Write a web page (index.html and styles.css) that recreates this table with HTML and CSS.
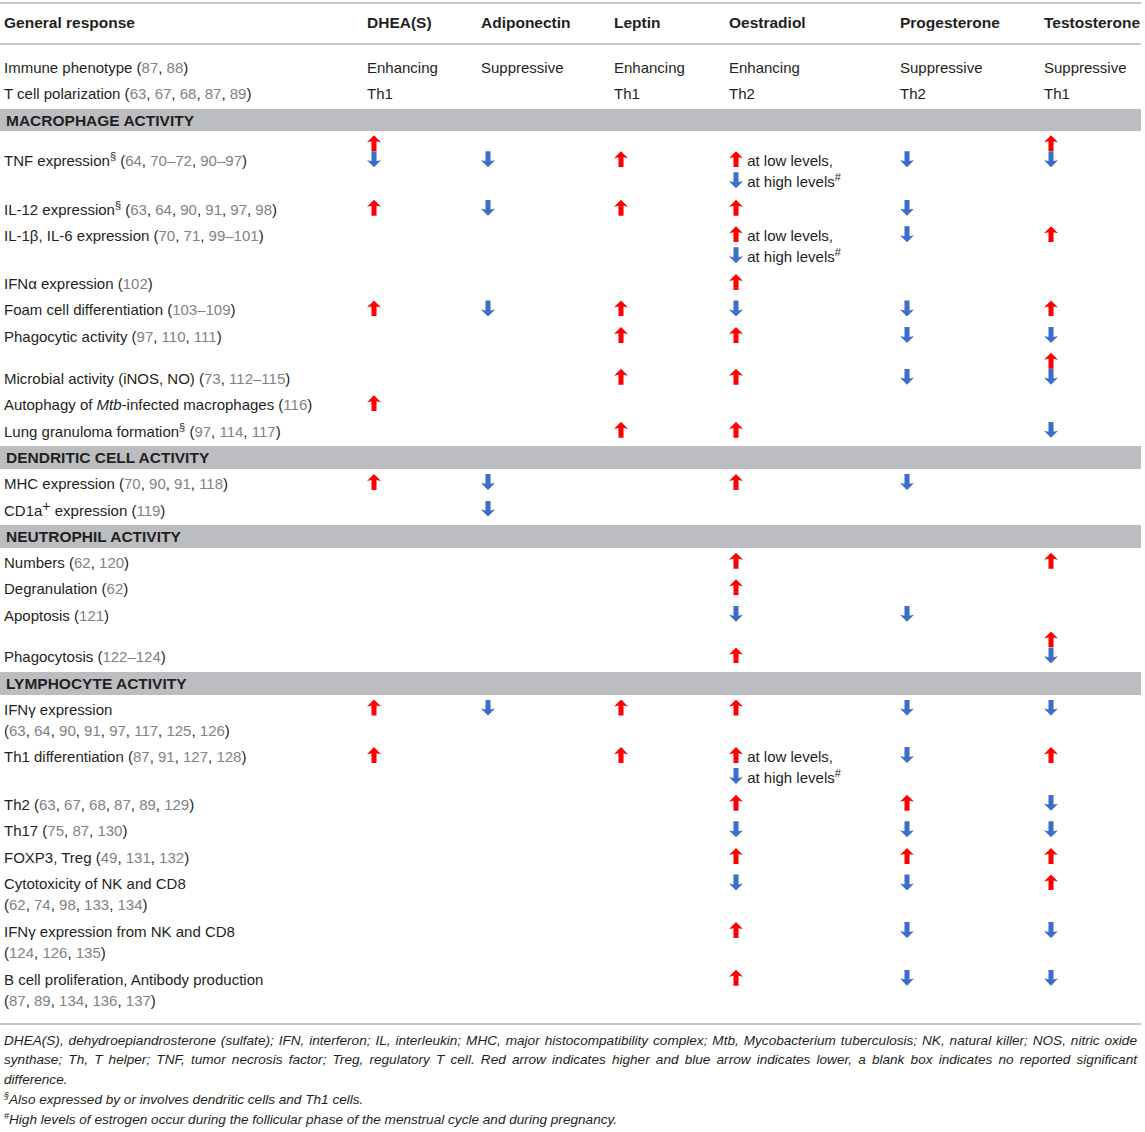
FILE: index.html
```html
<!DOCTYPE html>
<html lang="en">
<head>
    <meta charset="UTF-8">
    <title>Hormones and immune responses</title>
    <link rel="stylesheet" href="styles.css">
</head>
<body>
    <div class="page">
        <table class="data">
            <colgroup>
                <col class="c-resp">
                <col class="c-dhea">
                <col class="c-adipo">
                <col class="c-leptin">
                <col class="c-oes">
                <col class="c-prog">
                <col class="c-test">
            </colgroup>
            <thead>
                <tr>
                    <th>General response</th>
                    <th>DHEA(S)</th>
                    <th>Adiponectin</th>
                    <th>Leptin</th>
                    <th>Oestradiol</th>
                    <th>Progesterone</th>
                    <th>Testosterone</th>
                </tr>
            </thead>
            <tbody>
                <tr class="first">
                    <td>Immune phenotype (<span class="ref">87</span>, <span class="ref">88</span>)</td>
                    <td>Enhancing</td>
                    <td>Suppressive</td>
                    <td>Enhancing</td>
                    <td>Enhancing</td>
                    <td>Suppressive</td>
                    <td>Suppressive</td>
                </tr>
                <tr>
                    <td>T cell polarization (<span class="ref">63</span>, <span class="ref">67</span>, <span class="ref">68</span>, <span class="ref">87</span>, <span class="ref">89</span>)</td>
                    <td>Th1</td>
                    <td></td>
                    <td>Th1</td>
                    <td>Th2</td>
                    <td>Th2</td>
                    <td>Th1</td>
                </tr>

                <!-- Macrophage -->
                <tr class="section"><td colspan="7">Macrophage activity</td></tr>
                <tr class="tnf">
                    <td>TNF expression<sup>§</sup> (<span class="ref">64</span>, <span class="ref">70–72</span>, <span class="ref">90–97</span>)</td>
                    <td><span class="both"><i class="up"></i><i class="down"></i></span></td>
                    <td><i class="down"></i></td>
                    <td><i class="up"></i></td>
                    <td><i class="up"></i> at low levels,<br><i class="down"></i> at high levels<sup>#</sup></td>
                    <td><i class="down"></i></td>
                    <td><span class="both"><i class="up"></i><i class="down"></i></span></td>
                </tr>
                <tr>
                    <td>IL-12 expression<sup>§</sup> (<span class="ref">63</span>, <span class="ref">64</span>, <span class="ref">90</span>, <span class="ref">91</span>, <span class="ref">97</span>, <span class="ref">98</span>)</td>
                    <td><i class="up"></i></td>
                    <td><i class="down"></i></td>
                    <td><i class="up"></i></td>
                    <td><i class="up"></i></td>
                    <td><i class="down"></i></td>
                    <td></td>
                </tr>
                <tr>
                    <td>IL-1β, IL-6 expression (<span class="ref">70</span>, <span class="ref">71</span>, <span class="ref">99–101</span>)</td>
                    <td></td>
                    <td></td>
                    <td></td>
                    <td><i class="up"></i> at low levels,<br><i class="down"></i> at high levels<sup>#</sup></td>
                    <td><i class="down"></i></td>
                    <td><i class="up"></i></td>
                </tr>
                <tr>
                    <td>IFNα expression (<span class="ref">102</span>)</td>
                    <td></td>
                    <td></td>
                    <td></td>
                    <td><i class="up"></i></td>
                    <td></td>
                    <td></td>
                </tr>
                <tr>
                    <td>Foam cell differentiation (<span class="ref">103–109</span>)</td>
                    <td><i class="up"></i></td>
                    <td><i class="down"></i></td>
                    <td><i class="up"></i></td>
                    <td><i class="down"></i></td>
                    <td><i class="down"></i></td>
                    <td><i class="up"></i></td>
                </tr>
                <tr>
                    <td>Phagocytic activity (<span class="ref">97</span>, <span class="ref">110</span>, <span class="ref">111</span>)</td>
                    <td></td>
                    <td></td>
                    <td><i class="up"></i></td>
                    <td><i class="up"></i></td>
                    <td><i class="down"></i></td>
                    <td><i class="down"></i></td>
                </tr>
                <tr>
                    <td>Microbial activity (iNOS, NO) (<span class="ref">73</span>, <span class="ref">112–115</span>)</td>
                    <td></td>
                    <td></td>
                    <td><i class="up"></i></td>
                    <td><i class="up"></i></td>
                    <td><i class="down"></i></td>
                    <td><span class="both"><i class="up"></i><i class="down"></i></span></td>
                </tr>
                <tr>
                    <td>Autophagy of <em>Mtb</em>-infected macrophages (<span class="ref">116</span>)</td>
                    <td><i class="up"></i></td>
                    <td></td>
                    <td></td>
                    <td></td>
                    <td></td>
                    <td></td>
                </tr>
                <tr>
                    <td>Lung granuloma formation<sup>§</sup> (<span class="ref">97</span>, <span class="ref">114</span>, <span class="ref">117</span>)</td>
                    <td></td>
                    <td></td>
                    <td><i class="up"></i></td>
                    <td><i class="up"></i></td>
                    <td></td>
                    <td><i class="down"></i></td>
                </tr>

                <!-- Dendritic cells -->
                <tr class="section"><td colspan="7">Dendritic cell activity</td></tr>
                <tr>
                    <td>MHC expression (<span class="ref">70</span>, <span class="ref">90</span>, <span class="ref">91</span>, <span class="ref">118</span>)</td>
                    <td><i class="up"></i></td>
                    <td><i class="down"></i></td>
                    <td></td>
                    <td><i class="up"></i></td>
                    <td><i class="down"></i></td>
                    <td></td>
                </tr>
                <tr>
                    <td>CD1a<sup class="plus">+</sup> expression (<span class="ref">119</span>)</td>
                    <td></td>
                    <td><i class="down"></i></td>
                    <td></td>
                    <td></td>
                    <td></td>
                    <td></td>
                </tr>

                <!-- Neutrophils -->
                <tr class="section"><td colspan="7">Neutrophil activity</td></tr>
                <tr>
                    <td>Numbers (<span class="ref">62</span>, <span class="ref">120</span>)</td>
                    <td></td>
                    <td></td>
                    <td></td>
                    <td><i class="up"></i></td>
                    <td></td>
                    <td><i class="up"></i></td>
                </tr>
                <tr>
                    <td>Degranulation (<span class="ref">62</span>)</td>
                    <td></td>
                    <td></td>
                    <td></td>
                    <td><i class="up"></i></td>
                    <td></td>
                    <td></td>
                </tr>
                <tr>
                    <td>Apoptosis (<span class="ref">121</span>)</td>
                    <td></td>
                    <td></td>
                    <td></td>
                    <td><i class="down"></i></td>
                    <td><i class="down"></i></td>
                    <td></td>
                </tr>
                <tr>
                    <td>Phagocytosis (<span class="ref">122–124</span>)</td>
                    <td></td>
                    <td></td>
                    <td></td>
                    <td><i class="up"></i></td>
                    <td></td>
                    <td><span class="both"><i class="up"></i><i class="down"></i></span></td>
                </tr>

                <!-- Lymphocytes -->
                <tr class="section"><td colspan="7">Lymphocyte activity</td></tr>
                <tr>
                    <td>IFNγ expression<br>(<span class="ref">63</span>, <span class="ref">64</span>, <span class="ref">90</span>, <span class="ref">91</span>, <span class="ref">97</span>, <span class="ref">117</span>, <span class="ref">125</span>, <span class="ref">126</span>)</td>
                    <td><i class="up"></i></td>
                    <td><i class="down"></i></td>
                    <td><i class="up"></i></td>
                    <td><i class="up"></i></td>
                    <td><i class="down"></i></td>
                    <td><i class="down"></i></td>
                </tr>
                <tr>
                    <td>Th1 differentiation (<span class="ref">87</span>, <span class="ref">91</span>, <span class="ref">127</span>, <span class="ref">128</span>)</td>
                    <td><i class="up"></i></td>
                    <td></td>
                    <td><i class="up"></i></td>
                    <td><i class="up"></i> at low levels,<br><i class="down"></i> at high levels<sup>#</sup></td>
                    <td><i class="down"></i></td>
                    <td><i class="up"></i></td>
                </tr>
                <tr>
                    <td>Th2 (<span class="ref">63</span>, <span class="ref">67</span>, <span class="ref">68</span>, <span class="ref">87</span>, <span class="ref">89</span>, <span class="ref">129</span>)</td>
                    <td></td>
                    <td></td>
                    <td></td>
                    <td><i class="up"></i></td>
                    <td><i class="up"></i></td>
                    <td><i class="down"></i></td>
                </tr>
                <tr>
                    <td>Th17 (<span class="ref">75</span>, <span class="ref">87</span>, <span class="ref">130</span>)</td>
                    <td></td>
                    <td></td>
                    <td></td>
                    <td><i class="down"></i></td>
                    <td><i class="down"></i></td>
                    <td><i class="down"></i></td>
                </tr>
                <tr>
                    <td>FOXP3, Treg (<span class="ref">49</span>, <span class="ref">131</span>, <span class="ref">132</span>)</td>
                    <td></td>
                    <td></td>
                    <td></td>
                    <td><i class="up"></i></td>
                    <td><i class="up"></i></td>
                    <td><i class="up"></i></td>
                </tr>
                <tr>
                    <td>Cytotoxicity of NK and CD8<br>(<span class="ref">62</span>, <span class="ref">74</span>, <span class="ref">98</span>, <span class="ref">133</span>, <span class="ref">134</span>)</td>
                    <td></td>
                    <td></td>
                    <td></td>
                    <td><i class="down"></i></td>
                    <td><i class="down"></i></td>
                    <td><i class="up"></i></td>
                </tr>
                <tr>
                    <td>IFNγ expression from NK and CD8<br>(<span class="ref">124</span>, <span class="ref">126</span>, <span class="ref">135</span>)</td>
                    <td></td>
                    <td></td>
                    <td></td>
                    <td><i class="up"></i></td>
                    <td><i class="down"></i></td>
                    <td><i class="down"></i></td>
                </tr>
                <tr class="last">
                    <td>B cell proliferation, Antibody production<br>(<span class="ref">87</span>, <span class="ref">89</span>, <span class="ref">134</span>, <span class="ref">136</span>, <span class="ref">137</span>)</td>
                    <td></td>
                    <td></td>
                    <td></td>
                    <td><i class="up"></i></td>
                    <td><i class="down"></i></td>
                    <td><i class="down"></i></td>
                </tr>
            </tbody>
        </table>

        <div class="notes">
            <p>DHEA(S), dehydroepiandrosterone (sulfate); IFN, interferon; IL, interleukin; MHC, major histocompatibility complex; Mtb, Mycobacterium tuberculosis; NK, natural killer; NOS, nitric oxide synthase; Th, T helper; TNF, tumor necrosis factor; Treg, regulatory T cell. Red arrow indicates higher and blue arrow indicates lower, a blank box indicates no reported significant difference.</p>
            <p><sup>§</sup>Also expressed by or involves dendritic cells and Th1 cells.</p>
            <p><sup>#</sup>High levels of estrogen occur during the follicular phase of the menstrual cycle and during pregnancy.</p>
        </div>
    </div>
</body>
</html>
```

FILE: styles.css
```css
body {
    margin: 0;
    background: #ffffff;
    color: #231f20;
    font-family: "Liberation Sans", Arial, sans-serif;
}

.page {
    width: 1141px;
    padding-top: 2px;
}

.data {
    width: 1141px;
    border-collapse: collapse;
    table-layout: fixed;
    font-size: 15px;
    line-height: 21px;
}

.c-resp { width: 363px; }
.c-dhea { width: 114px; }
.c-adipo { width: 133px; }
.c-leptin { width: 115px; }
.c-oes { width: 171px; }
.c-prog { width: 144px; }
.c-test { width: 101px; }

.data th {
    text-align: left;
    font-size: 15.5px;
    font-weight: bold;
    padding: 8px 4px 10px;
    border-top: 2px solid #c6c6c6;
    border-bottom: 2px solid #c6c6c6;
    white-space: nowrap;
}

.data td {
    padding: 3px 4px 2.6px;
    vertical-align: baseline;
    white-space: nowrap;
}

.data tr.first td {
    padding-top: 11.5px;
}

.data tr.tnf td {
    padding-bottom: 3.5px;
}

.data tr.last td {
    padding-bottom: 12px;
}

.section td {
    background: #bcbdc0;
    font-size: 15.5px;
    font-weight: bold;
    text-transform: uppercase;
    padding: 1px 6px 0.5px;
    border-top: 2px solid #ffffff;
    border-bottom: 1.5px solid #ffffff;
}

.ref {
    color: #808285;
}

sup {
    font-size: 11px;
    line-height: 0;
    vertical-align: 6px;
}

sup.plus {
    font-size: 14px;
    vertical-align: 5px;
}

/* arrows */
.up,
.down {
    display: inline-block;
    width: 14px;
    height: 16px;
    vertical-align: -1px;
}

.up {
    background: #ff0000;
    clip-path: polygon(50% 0, 100% 44%, 68% 38%, 68% 100%, 32% 100%, 32% 38%, 0 44%);
}

.down {
    background: #3b6dca;
    clip-path: polygon(50% 100%, 100% 56%, 68% 62%, 68% 0, 32% 0, 32% 62%, 0 56%);
}

.both {
    display: inline-block;
    width: 14px;
    vertical-align: -1px;
}

.both .up,
.both .down {
    display: block;
}

.notes {
    border-top: 2px solid #c6c6c6;
    padding: 6px 4px 0;
    font-size: 13.6px;
    line-height: 19.75px;
    font-style: italic;
    color: #231f20;
}

.notes p {
    margin: 0;
    text-align: justify;
}

.notes sup {
    font-size: 9px;
    vertical-align: 5px;
}
```
